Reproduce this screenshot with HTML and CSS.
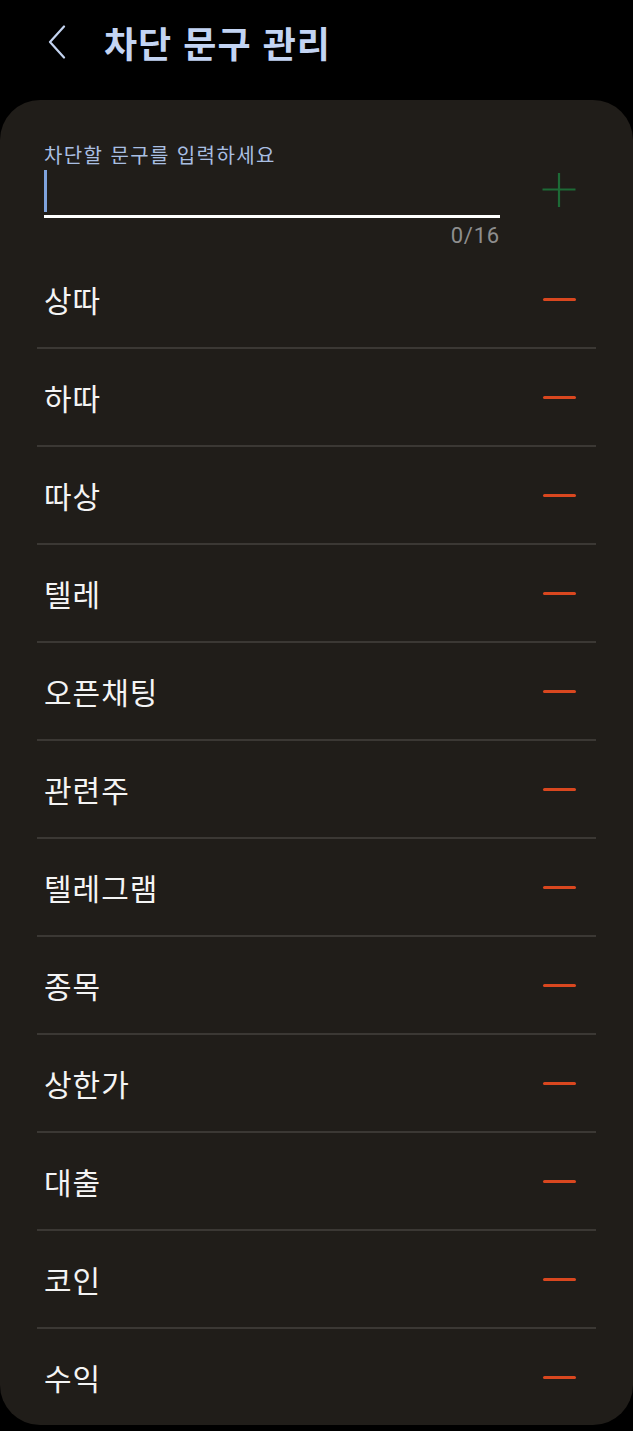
FILE: index.html
```html
<!DOCTYPE html>
<html lang="ko">
<head>
<meta charset="utf-8">
<title>차단 문구 관리</title>
<link rel="stylesheet" href="styles.css">
</head>
<body>
<header class="header">
  <svg class="back" width="20" height="34" viewBox="0 0 20 34"><path d="M17 1.5 L3 17 L17 32.5" fill="none" stroke="#c3d3f0" stroke-width="2.2" stroke-linecap="round" stroke-linejoin="round"/></svg>
  <h1 class="title">차단 문구 관리</h1>
</header>
<main class="card">
  <section class="input-section">
    <div class="field">
      <div class="label">차단할 문구를 입력하세요</div>
      <div class="input"><span class="cursor"></span></div>
      <div class="count">0/16</div>
    </div>
    <svg class="plus" width="34" height="36" viewBox="0 0 34 36"><path d="M17 1 V35 M0.5 17.5 H33.5" stroke="#1d6a36" stroke-width="2.2" fill="none"/></svg>
  </section>
  <ul class="list">
    <li class="row"><span class="word">상따</span><span class="minus"></span></li>
    <li class="row"><span class="word">하따</span><span class="minus"></span></li>
    <li class="row"><span class="word">따상</span><span class="minus"></span></li>
    <li class="row"><span class="word">텔레</span><span class="minus"></span></li>
    <li class="row"><span class="word">오픈채팅</span><span class="minus"></span></li>
    <li class="row"><span class="word">관련주</span><span class="minus"></span></li>
    <li class="row"><span class="word">텔레그램</span><span class="minus"></span></li>
    <li class="row"><span class="word">종목</span><span class="minus"></span></li>
    <li class="row"><span class="word">상한가</span><span class="minus"></span></li>
    <li class="row"><span class="word">대출</span><span class="minus"></span></li>
    <li class="row"><span class="word">코인</span><span class="minus"></span></li>
    <li class="row"><span class="word">수익</span><span class="minus"></span></li>
  </ul>
</main>
</body>
</html>
```

FILE: styles.css
```css
* { box-sizing: border-box; }
html, body {
  margin: 0;
  padding: 0;
  background: #000;
}
body {
  width: 633px;
  height: 1431px;
  overflow: hidden;
  font-family: "Noto Sans CJK KR", "Noto Sans", sans-serif;
  color: #f2f2f2;
}
.header {
  height: 100px;
  display: flex;
  align-items: center;
  padding: 0 0 16px 47px;
}
.back {
  display: block;
  margin-right: 37px;
}
.title {
  margin: 0;
  font-size: 36px;
  font-weight: 700;
  color: #c3d4f3;
  line-height: 40px;
  letter-spacing: 1px;
}
.card {
  background: #201d19;
  border-radius: 40px;
  height: 1325px;
  overflow: hidden;
}
.input-section {
  display: flex;
  align-items: flex-start;
  padding: 43px 57px 0 44px;
  justify-content: space-between;
}
.field {
  width: 456px;
}
.label {
  font-size: 20px;
  line-height: 24px;
  color: #a9bfe2;
  letter-spacing: 1.4px;
  white-space: nowrap;
}
.input {
  height: 51px;
  border-bottom: 3px solid #ffffff;
  padding-top: 3px;
}
.cursor {
  display: block;
  width: 3px;
  height: 42px;
  background: #7fa3dc;
}
.count {
  text-align: right;
  font-family: Roboto, "Noto Sans", sans-serif;
  font-size: 22px;
  line-height: 24px;
  margin-top: 6px;
  color: #8e8e8e;
  letter-spacing: 0.8px;
}
.plus {
  display: block;
  margin-top: 29px;
}
.list {
  list-style: none;
  margin: 3px 37px 0;
  padding: 0;
}
.row {
  height: 98px;
  border-top: 2px solid #3b3834;
  display: flex;
  align-items: center;
  justify-content: space-between;
  padding: 0 20px 0 7px;
}
.row:first-child {
  height: 96px;
  border-top: none;
}
.word {
  font-size: 30px;
  line-height: 36px;
  color: #f4f4f4;
  letter-spacing: 1px;
}
.minus {
  display: block;
  width: 33px;
  height: 3px;
  border-radius: 1.5px;
  background: #d9471f;
}
```
